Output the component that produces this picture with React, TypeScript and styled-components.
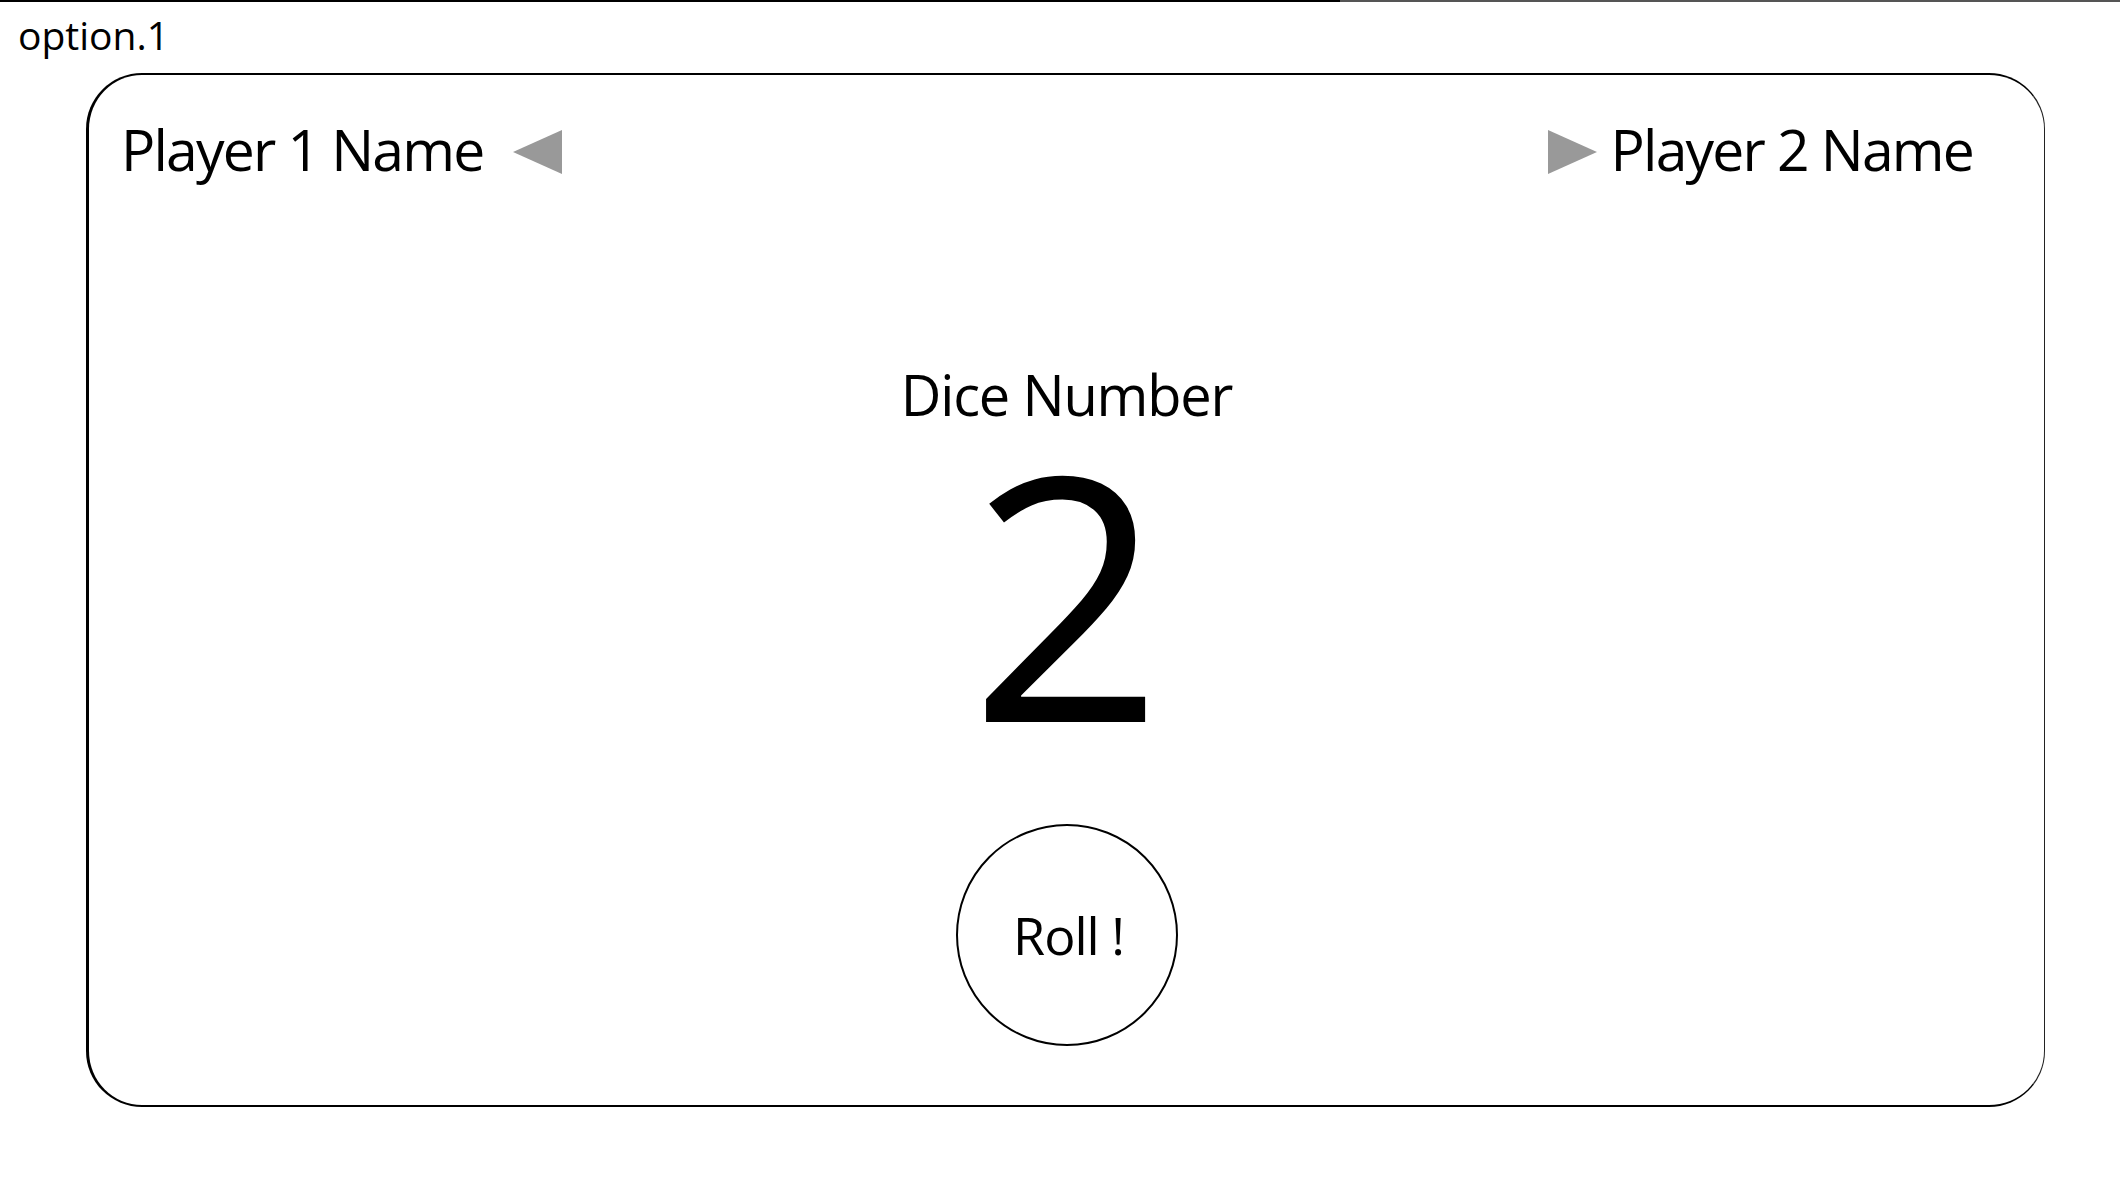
import React from 'react';
import styled, { createGlobalStyle } from 'styled-components';

const GlobalStyle = createGlobalStyle`
  html, body {
    margin: 0;
    padding: 0;
    background: #fff;
  }
  body {
    font-family: 'Open Sans', 'Noto Sans', Arial, sans-serif;
    color: #000;
  }
`;

const Page = styled.div`
  width: 2120px;
  min-height: 1186px;
  display: flex;
  flex-direction: column;
`;

const TopRule = styled.div`
  height: 2px;
  background: linear-gradient(to right, #000 0, #000 1340px, #555 1340px, #555 100%);
`;

const OptionLabel = styled.div`
  margin: 13px 0 0 18px;
  font-size: 39px;
  line-height: 1;
`;

const Card = styled.section`
  box-sizing: border-box;
  margin: 19px 0 0 86px;
  width: 1959px;
  height: 1034px;
  border: 2px solid #000;
  border-left-width: 3px;
  border-right: 1.5px solid #222;
  border-radius: 56px;
  padding: 46px 32px 0;
  display: flex;
  flex-direction: column;
`;

const Header = styled.header`
  display: flex;
  justify-content: space-between;
  align-items: center;
  padding-right: 39px;
`;

const Player = styled.div<{ $reverse?: boolean }>`
  display: flex;
  align-items: center;
  gap: ${(p) => (p.$reverse ? '14px' : '30px')};
  flex-direction: ${(p) => (p.$reverse ? 'row-reverse' : 'row')};
`;

const PlayerName = styled.span`
  font-size: 57px;
  line-height: 1;
  letter-spacing: -1.8px;
`;

const Turn = styled.svg`
  width: 49px;
  height: 44px;
  margin-top: 4px;
  display: block;
`;

const Board = styled.div`
  display: flex;
  flex-direction: column;
  align-items: center;
  margin-top: 194px;
`;

const DiceTitle = styled.h2`
  margin: 0;
  font-weight: 400;
  font-size: 56px;
  line-height: 0.8;
  letter-spacing: -1.2px;
`;

const DiceValue = styled.div`
  margin-top: 4px;
  font-size: 340px;
  line-height: 1;
`;

const RollButton = styled.button`
  box-sizing: border-box;
  margin-top: 63px;
  width: 222px;
  height: 222px;
  border-radius: 50%;
  border: 2px solid #000;
  background: #fff;
  color: #000;
  font-family: inherit;
  font-size: 52px;
  letter-spacing: -1px;
  padding: 0 0 0 4px;
  display: flex;
  align-items: center;
  justify-content: center;
  cursor: pointer;
`;

const Arrow: React.FC<{ dir: 'left' | 'right' }> = ({ dir }) => (
  <Turn viewBox="0 0 49 44">
    {dir === 'left' ? (
      <polygon points="49,0 49,44 0,22" fill="#999" />
    ) : (
      <polygon points="0,0 0,44 49,22" fill="#999" />
    )}
  </Turn>
);

export default function App() {
  return (
    <Page>
      <GlobalStyle />
      <TopRule />
      <OptionLabel>option.1</OptionLabel>
      <Card>
        <Header>
          <Player>
            <PlayerName>Player 1 Name</PlayerName>
            <Arrow dir="left" />
          </Player>
          <Player $reverse>
            <PlayerName>Player 2 Name</PlayerName>
            <Arrow dir="right" />
          </Player>
        </Header>
        <Board>
          <DiceTitle>Dice Number</DiceTitle>
          <DiceValue>2</DiceValue>
          <RollButton>Roll !</RollButton>
        </Board>
      </Card>
    </Page>
  );
}
